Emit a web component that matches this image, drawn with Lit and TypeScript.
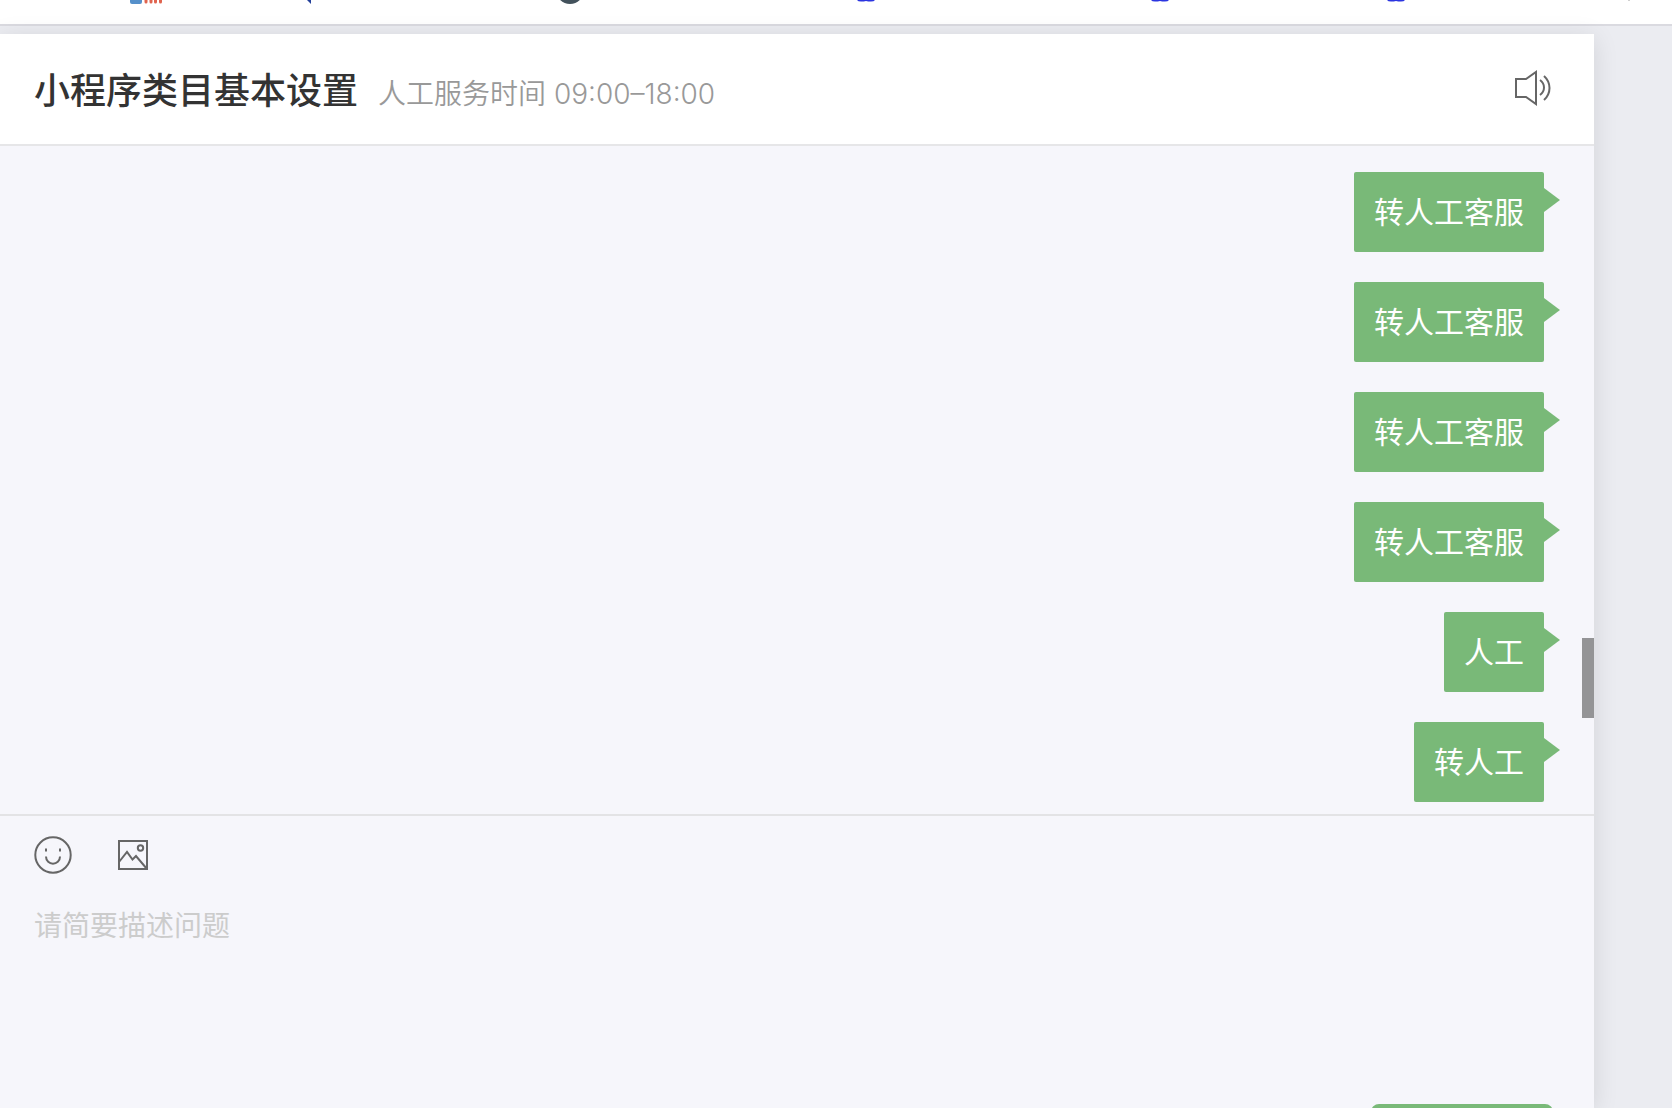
import { LitElement, html, css, svg } from "lit";
import { customElement, state } from "lit/decorators.js";

const MESSAGES = ["转人工客服", "转人工客服", "转人工客服", "转人工客服", "人工", "转人工"];

const paw = svg`<path d="M1 0H19Q18 1.600 15 1.600Q12 1.600 10 1Q8 1.600 5 1.600Q2 1.600 1 0Z" fill="#2b35e0"/>`;

@customElement("chat-bubble")
class ChatBubble extends LitElement {
  static styles = css`
    :host {
      display: block;
      position: relative;
      padding: 18px 20px;
      border-radius: 2px;
      background: #79b978;
      color: #fff;
      font-size: 30px;
      line-height: 44px;
    }
    :host::after {
      content: "";
      position: absolute;
      left: 100%;
      top: 16px;
      border: solid transparent;
      border-width: 12px 0 12px 16px;
      border-left-color: #79b978;
    }
  `;
  render() {
    return html`<slot></slot>`;
  }
}

@customElement("app-root")
class AppRoot extends LitElement {
  @state() private muted = false;

  static styles = css`
    :host {
      display: flex;
      flex-direction: column;
      height: 100vh;
      overflow: hidden;
      background: #ebecf1;
      color: #333;
      font-family: Inter, "Noto Sans CJK SC", sans-serif;
      font-weight: 350;
    }
    * {
      box-sizing: border-box;
    }
    svg {
      display: block;
      fill: none;
    }
    button {
      padding: 0;
      border: 0;
      background: none;
      color: #666;
      font: inherit;
      cursor: pointer;
    }
    .bookmarks {
      flex: none;
      height: 26px;
      overflow: hidden;
      background: #fff;
      border-bottom: 2px solid #dadae0;
    }
    .panel {
      flex: 1;
      min-height: 0;
      display: flex;
      flex-direction: column;
      margin: 8px 78px 0 0;
      background: #f6f6fb;
      box-shadow: 0 4px 24px rgba(0, 0, 0, 0.11);
    }
    .head {
      flex: none;
      display: flex;
      align-items: center;
      justify-content: space-between;
      height: 112px;
      padding: 0 42px 0 34px;
      background: #fff;
      border-bottom: 2px solid #e6e6e8;
    }
    .titles {
      display: flex;
      align-items: baseline;
      gap: 20px;
      padding-top: 4px;
    }
    h1 {
      margin: 0;
      font-size: 36px;
      line-height: 48px;
      font-weight: 500;
    }
    .hours {
      margin: 0;
      color: #999;
      font-size: 28px;
      line-height: 40px;
    }
    .log {
      flex: none;
      display: flex;
      justify-content: flex-end;
      padding-left: 34px;
      border-bottom: 2px solid #e3e3e5;
    }
    .list {
      display: flex;
      flex-direction: column;
      align-items: flex-end;
      gap: 30px;
      margin: 0;
      padding: 26px 38px 12px 0;
      list-style: none;
      font-weight: 400;
    }
    .track {
      display: flex;
      flex-direction: column;
      width: 12px;
    }
    .track::before {
      content: "";
      flex: 492;
    }
    .track::after {
      content: "";
      flex: 96;
    }
    .thumb {
      flex: 80;
      background: #949496;
    }
    .compose {
      flex: 1;
      min-height: 0;
      display: flex;
      flex-direction: column;
      padding: 20px 41px 0 34px;
    }
    .tools {
      display: flex;
      align-items: center;
      gap: 46px;
    }
    .entry {
      flex: none;
      height: 198px;
      margin-top: 32px;
      padding: 0;
      border: 0;
      outline: 0;
      resize: none;
      background: none;
      color: #333;
      font: inherit;
      font-weight: 400;
      font-size: 28px;
      line-height: 40px;
    }
    .entry::placeholder {
      color: #ccc;
      opacity: 1;
    }
    .send {
      flex: none;
      align-self: flex-end;
      width: 182px;
      height: 64px;
      border-radius: 8px;
      background: #79b978;
      color: #fff;
    }
  `;

  render() {
    return html`
      <div class="bookmarks">
        <svg width="1672" height="24" aria-hidden="true">
          <path d="M130 0H142V2Q142 4 140 4H132Q130 4 130 2Z" fill="#5590ca" />
          <path d="M146 0V2M151 0V2M155.500 0V2M160.500 0V2" stroke="#e0644f" stroke-width="3" stroke-linecap="round" />
          <path d="M307 0H311V4Z" fill="#24409a" />
          <circle cx="570" cy="-10" r="14" fill="#43525c" />
          <g transform="translate(856 0)">${paw}</g>
          <g transform="translate(1150 0)">${paw}</g>
          <g transform="translate(1386 0)">${paw}</g>
          <path d="M1628 0H1630V1H1628Z" fill="#d0d0d0" />
        </svg>
      </div>
      <main class="panel">
        <header class="head">
          <div class="titles">
            <h1>小程序类目基本设置</h1>
            <p class="hours">人工服务时间 09:00–18:00</p>
          </div>
          <button type="button" aria-label="声音" aria-pressed=${this.muted} @click=${() => (this.muted = !this.muted)}>
            <svg width="38" height="40" stroke="currentColor" stroke-width="2">
              <path d="M2 10H12L22 3V35L12 28H2Z" />
              <path d="M26 11Q30 14 30 18.500Q30 23 26 26M30 7Q35.500 12 35.500 19Q35.500 26 30 31" />
            </svg>
          </button>
        </header>
        <section class="log">
          <ul class="list">
            ${MESSAGES.map((text) => html`<li><chat-bubble>${text}</chat-bubble></li>`)}
          </ul>
          <div class="track"><div class="thumb"></div></div>
        </section>
        <form class="compose" @submit=${(e: Event) => e.preventDefault()}>
          <div class="tools">
            <button type="button" aria-label="表情">
              <svg width="38" height="38" stroke="currentColor" stroke-width="2">
                <circle cx="19" cy="19" r="17.700" />
                <path d="M12 12.500V15.500M26 12.500V15.500M12 20.500C12 30 26 30 26 20.500" />
              </svg>
            </button>
            <button type="button" aria-label="图片">
              <svg width="30" height="30" stroke="currentColor" stroke-width="2">
                <path d="M1 1H29V29H1ZM1 22L9 12L14.500 19.500L18 16L29 29" />
                <circle cx="22.500" cy="8" r="2.700" />
              </svg>
            </button>
          </div>
          <textarea class="entry" aria-label="问题描述" placeholder="请简要描述问题"></textarea>
          <button class="send" type="submit" aria-label="发送"></button>
        </form>
      </main>
    `;
  }
}
